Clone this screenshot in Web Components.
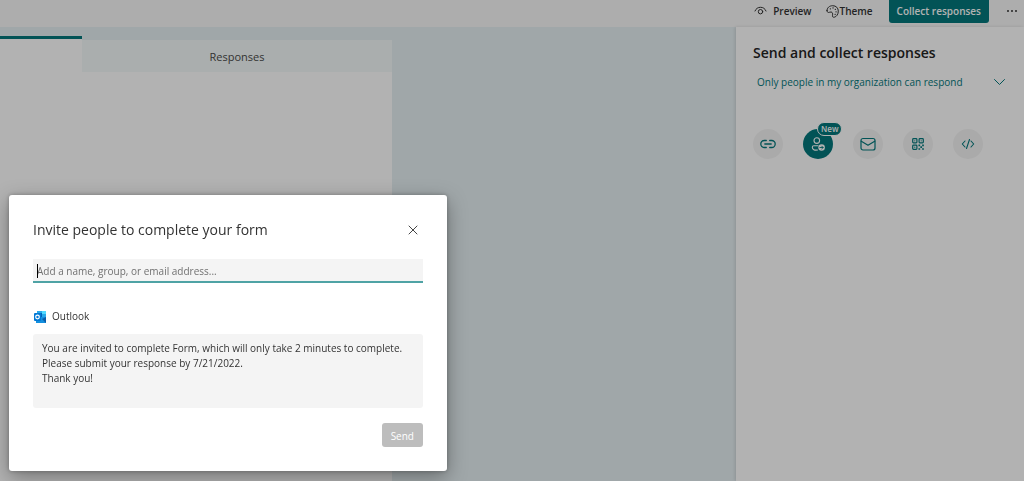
<!DOCTYPE html>
<html lang="en">
<head>
<meta charset="utf-8">
<meta name="viewport" content="width=device-width, initial-scale=1">
<title>Send and collect responses</title>
<style>
  :root { --teal: #03787c; --ink: #242424; }
  html, body { height: 100%; }
  body { margin: 0; overflow: hidden; font-family: "Open Sans", "Noto Sans", sans-serif; font-size: 10px; line-height: 15px; color: var(--ink); }
</style>
</head>
<body>
<forms-app></forms-app>
<script>
const define = (name, html) => {
  const template = document.createElement('template');
  template.innerHTML = `<style>*{box-sizing:border-box} button,input,select,textarea{font:inherit;margin:0;border:0;border-radius:0} svg{display:block;fill:none;stroke:currentColor;stroke-linecap:round;stroke-linejoin:round;flex:none}</style>` + html;
  customElements.define(name, class extends HTMLElement {
    constructor() {
      super();
      this.attachShadow({ mode: 'open' }).append(template.content.cloneNode(true));
    }
  });
};

define('command-bar', `
<style>
  :host { display: flex; justify-content: flex-end; align-items: flex-start; height: 27px; padding-right: 6px; background: #f8f8f8; }
  button { display: flex; align-items: center; height: 23px; padding: 0; background: none; color: #333; font-weight: 600; white-space: nowrap; }
  .preview { gap: 6px; margin-right: 15px; }
  .theme { margin-right: 16px; }
  .collect { padding: 0 8px; margin-right: 17px; border-radius: 0 0 3px 3px; background: var(--teal); color: #fff; }
  .more { height: 21px; }
</style>
<button class="preview"><svg width="13" height="13" viewBox="0 0 13 13" stroke-width="1"><path d="M1 6C2 3.500 4 2.300 6.500 2.300S11 3.500 12 6"/><circle cx="6.500" cy="6.700" r="2.200"/></svg>Preview</button>
<button class="theme"><svg width="13" height="13" viewBox="0 0 13 13" stroke-width="1"><path d="M1 5.700C.9 2.700 3.500.7 6.700.7c3.400 0 5.600 2.300 5.600 5.400 0 3.300-1.900 5.700-4 6.100-1.500.3-2.100-.7-1.800-1.900.4-1.600 0-3-1.300-3.300-1.300-.3-1.800.7-2.700.5C1.500 7.300 1 6.700 1 5.700Z"/><path d="M4.300 3.800h.1M7 2.900h.1M9.300 4.300h.1M10 6.800h.1M9.100 9.300h.1" stroke-width="1.300"/></svg>Theme</button>
<button class="collect">Collect responses</button>
<button class="more" aria-label="More options"><svg width="12" height="12" viewBox="0 0 12 12" stroke-width="2"><path d="M2 6h0M6 6h0M10 6h0"/></svg></button>
`);

define('form-tabs', `
<style>
  :host { display: grid; grid-template-columns: 82fr 310fr; height: 36px; margin-top: 9px; font-size: 11px; }
  button { padding: 0; }
  .questions { border-top: 3px solid var(--teal); background: #fff; }
  .responses { margin-top: 4px; background: #f4faf9; color: #4a4a4a; }
</style>
<button class="questions" aria-label="Questions"></button>
<button class="responses">Responses</button>
`);

define('channel-button', `
<style>
  :host { display: block; position: relative; color: var(--teal); }
  button { display: grid; place-items: center; width: 30px; height: 30px; padding: 0; border-radius: 50%; background: #f4f4f4; color: inherit; }
  :host([active]) button { background: var(--teal); color: #fff; }
  ::slotted(svg) { display: block; fill: none; stroke: currentColor; stroke-linecap: round; stroke-linejoin: round; }
  ::slotted(span) { position: absolute; left: 14px; top: -7px; padding: 0 3px; border: 1px solid #fff; border-radius: 8px; background: var(--teal); color: #fff; font-size: 8px; line-height: 12px; font-weight: 600; }
</style>
<button><slot></slot></button><slot name="badge"></slot>
`);

define('collect-panel', `
<style>
  :host { display: block; padding: 17px 17px 0; background: #fff; box-shadow: -1px 0 3px rgba(0,0,0,.12); }
  h2 { margin: 0; font-size: 14px; line-height: 18px; font-weight: 600; }
  .who { display: flex; align-items: center; margin-top: 10px; padding-left: 4px; color: var(--teal); }
  select { flex: 1; min-width: 0; height: 20px; padding: 0; appearance: none; background: none; color: inherit; }
  .channels { display: flex; gap: 20px; margin-top: 37px; }
</style>
<h2>Send and collect responses</h2>
<div class="who"><select aria-label="Who can respond"><option>Only people in my organization can respond</option></select><svg width="14" height="8" viewBox="0 0 14 8" stroke-width="1"><path d="m1.500 1.500 5 5 5-5"/></svg></div>
<div class="channels">
  <channel-button title="Copy link"><svg width="16" height="16" viewBox="0 0 16 16" stroke-width="1.300"><path d="M6.300 4.500h-2a3.500 3.500 0 0 0 0 7h2M9.700 4.500h2a3.500 3.500 0 0 1 0 7h-2M4.800 8h6.400"/></svg></channel-button>
  <channel-button title="Invite people" active><svg width="16" height="16" viewBox="0 0 16 16" stroke-width="1.100"><circle cx="6.800" cy="4.600" r="2.800"/><path d="M7.500 14C4.500 14.500 2.300 13.500 2.300 11.300c0-1 .6-1.600 1.600-1.600H8"/><circle cx="11.600" cy="11.500" r="3.300" fill="currentColor" stroke="none"/><path d="M9.900 11.500h3.200m-1.300-1.300 1.300 1.300-1.300 1.300" stroke="#03787c" stroke-width=".9"/></svg><span slot="badge">New</span></channel-button>
  <channel-button title="Email"><svg width="16" height="16" viewBox="0 0 16 16" stroke-width="1.200"><rect x="1" y="2.500" width="14" height="11.500" rx="2"/><path d="m1.300 5.200 6.700 4 6.700-4"/></svg></channel-button>
  <channel-button title="QR code"><svg width="12" height="12" viewBox="0 0 12 12" stroke-width="1.200"><rect x=".7" y=".7" width="4.200" height="4.200" rx=".8"/><rect x="7.100" y=".7" width="4.200" height="4.200" rx=".8"/><rect x=".7" y="7.100" width="4.200" height="4.200" rx=".8"/><path d="M2.800 2.800h0M9.200 2.800h0M2.800 9.200h0" stroke-width="1.200"/><path d="M7.300 7.300h0M11 7.300h0M9.200 9.200h0M7.300 11h0M11 11h0" stroke-width="1.700" stroke-linecap="square"/></svg></channel-button>
  <channel-button title="Embed"><svg width="14" height="12" viewBox="0 0 14 12" stroke-width="1.100"><path d="M4 3 1.300 6 4 9M10 3l2.700 3L10 9M8.500 1.500l-3 9"/></svg></channel-button>
</div>
`);

define('invite-dialog', `
<style>
  :host { display: block; padding: 24px; border-radius: 3px; background: #fff; color: #333; box-shadow: 0 6px 20px rgba(0,0,0,.35), 0 0 4px rgba(0,0,0,.25); }
  header { display: flex; justify-content: space-between; align-items: center; height: 22px; }
  h1 { margin: 0; font-size: 14px; line-height: 20px; font-weight: 400; }
  .close { padding: 5px; background: none; color: #444; }
  .people { position: relative; margin-top: 18px; }
  .people::before { content: ""; position: absolute; left: 4px; top: 5px; width: 1px; height: 14px; background: #000; }
  input { display: block; width: 100%; height: 24px; padding: 1px 4px 0; border-bottom: 2px solid #4fa3a5; background: #f4f4f4; color: inherit; outline: 0; }
  input::placeholder { color: #707070; opacity: 1; }
  .app { display: flex; align-items: center; gap: 5px; margin: 26px 0 10px; }
  .app svg { stroke: none; }
  textarea { display: block; width: 100%; height: 74px; padding: 7px 9px; border-radius: 3px; background: #f4f4f4; color: #333; resize: none; overflow: hidden; }
  footer { display: flex; justify-content: flex-end; margin-top: 15px; }
  .send { height: 24px; padding: 2px 9px 0; border-radius: 3px; background: #bdbdbd; color: #fff; }
</style>
<header><h1>Invite people to complete your form</h1><button class="close" aria-label="Close"><svg width="10" height="10" viewBox="0 0 10 10" stroke-width="1"><path d="m1 1 8 8M9 1 1 9"/></svg></button></header>
<div class="people"><input aria-label="People to invite" placeholder="Add a name, group, or email address..."></div>
<label class="app" for="message"><svg width="14" height="14" viewBox="0 0 14 14"><path fill="#28a8ea" d="M4 1h9v6H4z"/><path fill="#50d9ff" d="M9 1h4v3H9z"/><path fill="#0364b8" d="M4 3h5v5H4z"/><path fill="#1490df" d="M3 7h10v6H3z"/><path fill="#0a5ca8" d="m9 9 4-2v6z"/><rect x="1" y="3" width="7" height="8" rx="1" fill="#0078d4"/><circle cx="4.500" cy="7" r="1.800" fill="none" stroke="#fff" stroke-width="1.200"/></svg>Outlook</label>
<textarea id="message">You are invited to complete Form, which will only take 2 minutes to complete.
Please submit your response by 7/21/2022.
Thank you!</textarea>
<footer><button class="send">Send</button></footer>
`);

define('forms-app', `
<style>
  :host { display: flex; flex-direction: column; height: 100%; }
  main { flex: 1; display: grid; grid-template-columns: 392fr 344fr 288fr; min-height: 0; background: #e5eff2; }
  .form { display: flex; flex-direction: column; }
  .page { flex: 1; background: #fff; }
  .backdrop { position: fixed; inset: 0; background: rgba(0,0,0,.3); }
  invite-dialog { position: fixed; left: 9px; bottom: 10px; width: 438px; max-width: calc(100% - 18px); }
</style>
<command-bar></command-bar>
<main>
  <section class="form"><form-tabs></form-tabs><div class="page"></div></section>
  <div></div>
  <collect-panel></collect-panel>
</main>
<div class="backdrop"></div>
<invite-dialog role="dialog" aria-label="Invite people to complete your form"></invite-dialog>
`);
</script>
</body>
</html>
